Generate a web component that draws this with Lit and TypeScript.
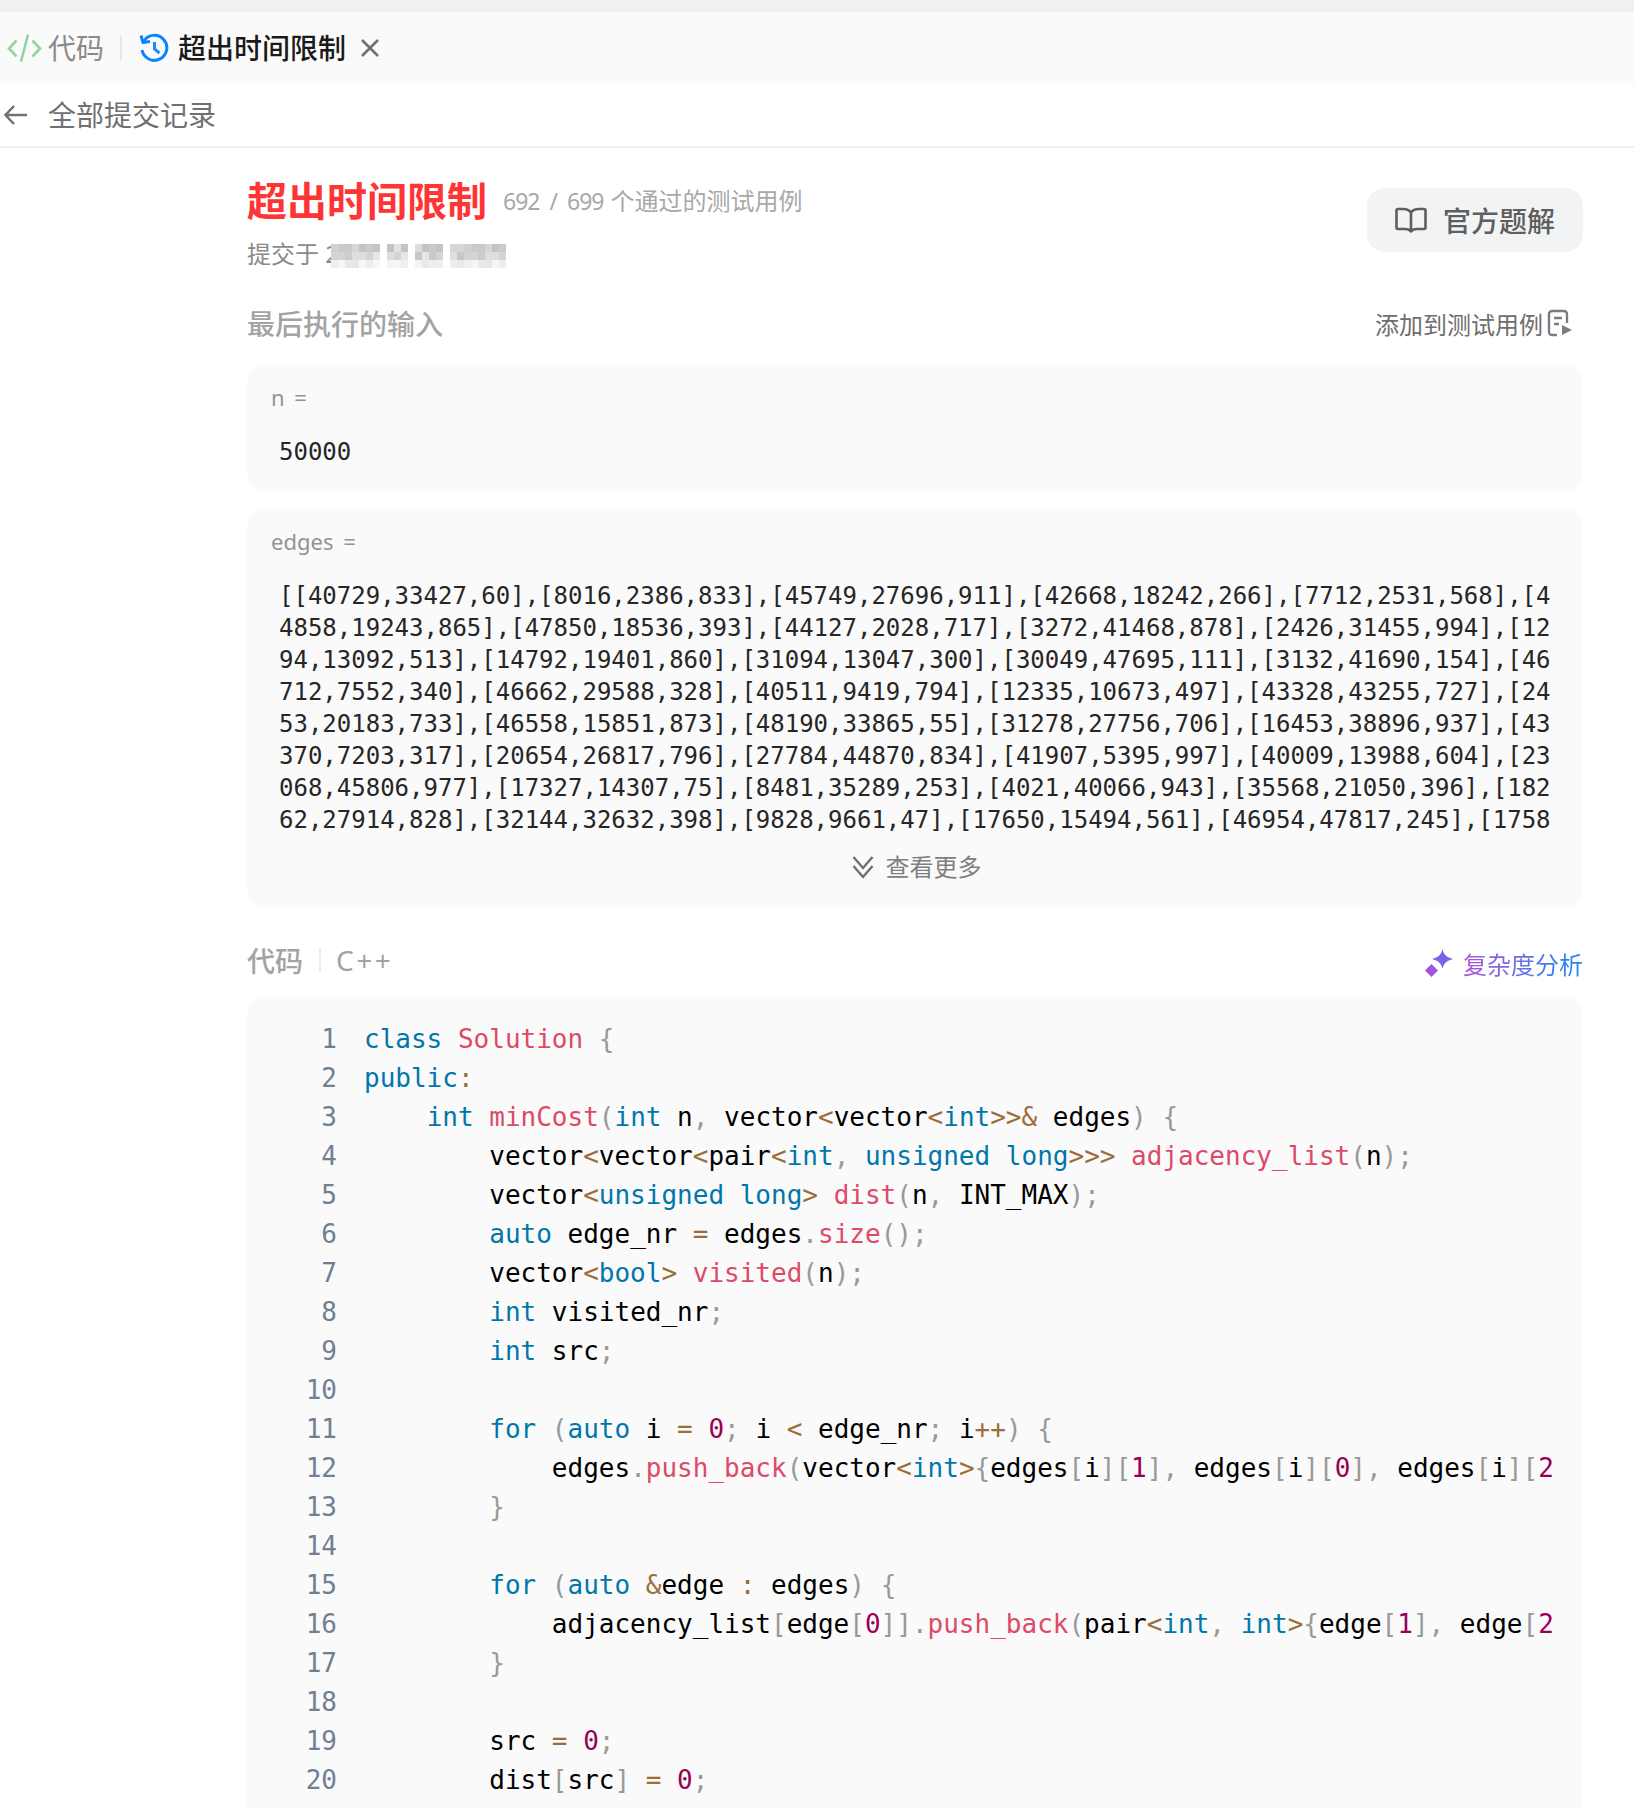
import { LitElement, html, css, svg } from "lit";
import { customElement } from "lit/decorators.js";

const EDGES = [
  "[[40729,33427,60],[8016,2386,833],[45749,27696,911],[42668,18242,266],[7712,2531,568],[4",
  "4858,19243,865],[47850,18536,393],[44127,2028,717],[3272,41468,878],[2426,31455,994],[12",
  "94,13092,513],[14792,19401,860],[31094,13047,300],[30049,47695,111],[3132,41690,154],[46",
  "712,7552,340],[46662,29588,328],[40511,9419,794],[12335,10673,497],[43328,43255,727],[24",
  "53,20183,733],[46558,15851,873],[48190,33865,55],[31278,27756,706],[16453,38896,937],[43",
  "370,7203,317],[20654,26817,796],[27784,44870,834],[41907,5395,997],[40009,13988,604],[23",
  "068,45806,977],[17327,14307,75],[8481,35289,253],[4021,40066,943],[35568,21050,396],[182",
  "62,27914,828],[32144,32632,398],[9828,9661,47],[17650,15494,561],[46954,47817,245],[1758",
];

const CODE = [
  "class Solution {",
  "public:",
  "    int minCost(int n, vector<vector<int>>& edges) {",
  "        vector<vector<pair<int, unsigned long>>> adjacency_list(n);",
  "        vector<unsigned long> dist(n, INT_MAX);",
  "        auto edge_nr = edges.size();",
  "        vector<bool> visited(n);",
  "        int visited_nr;",
  "        int src;",
  "",
  "        for (auto i = 0; i < edge_nr; i++) {",
  "            edges.push_back(vector<int>{edges[i][1], edges[i][0], edges[i][2]});",
  "        }",
  "",
  "        for (auto &edge : edges) {",
  "            adjacency_list[edge[0]].push_back(pair<int, int>{edge[1], edge[2]});",
  "        }",
  "",
  "        src = 0;",
  "        dist[src] = 0;",
];

const KW = new Set(["class", "public", "int", "unsigned", "long", "auto", "for", "bool"]);

function tokens(line: string) {
  const re = /\s+|[A-Za-z_]\w*|\d+|[{}\[\]();,.]|[<>=&:+]/g;
  return (line.match(re) || []).map((t, i, all) => {
    let c = "";
    if (KW.has(t)) c = "k";
    else if (/^[A-Za-z_]/.test(t)) {
      if (t === "Solution" || all[i + 1] === "(") c = "f";
    } else if (/^\d/.test(t)) c = "n";
    else if (/^[{}\[\]();,.]/.test(t)) c = "p";
    else if (/^[<>=&:+]/.test(t)) c = "o";
    return c ? html`<span class=${c}>${t}</span>` : t;
  });
}

const BLUR: [number, number, number, string][] = [];
(function () {
  const rows = [
    ["#d6d6d6", "#cacaca", "#dcdcdc", "#c4c4c4", "#d0d0d0", "#e2e2e2"],
    ["#dedede", "#cccccc", "#ececec", "#c8c8c8", "#e6e6e6", "#d4d4d4"],
    ["#efefef", "#e9e9e9", "#f4f4f4", "#e6e6e6", "#eeeeee", "#f6f6f6"],
  ];
  let s = 7;
  const spans = [[0, 49], [56, 77], [84, 112], [119, 175]];
  for (const [a, b] of spans) {
    for (let x = a; x < b; x += 7) {
      for (let y = 0; y < 3; y++) {
        s = (s * 31 + 11) % 97;
        BLUR.push([x, y * 8, Math.min(7, b - x), rows[y][s % 6]]);
      }
    }
  }
})();

@customElement("app-root")
export class AppRoot extends LitElement {
  static styles = css`
    :host {
      display: block;
      width: 1634px;
      height: 1808px;
      overflow: hidden;
      background: #fff;
      font-family: "Noto Sans", "Noto Sans CJK SC", sans-serif;
      color: #666;
    }
    .top { height: 12px; background: #f0f0f0; }
    .tabs {
      height: 72px;
      background: #fafafa;
      display: flex;
      align-items: center;
      font-size: 28px;
      padding-left: 6px;
    }
    .tabs svg { flex: none; }
    .t-code { color: #8a8a8a; margin-left: 6px; line-height: 40px; }
    .sep { width: 2px; height: 24px; background: #e6e6e6; margin: 0 17px 0 16px; }
    .t-act { color: #1a1a1a; font-weight: 500; margin-left: 9px; line-height: 40px; }
    .x { margin-left: 13px; }
    .back {
      height: 64px;
      box-sizing: border-box;
      padding: 0 0 0 3px;
      border-bottom: 2px solid #f0f0f0;
      display: flex;
      align-items: center;
      font-size: 28px;
      color: #707070;
      gap: 20px;
    }
    .back span { margin-top: -2px; }
    .main { padding: 40px 51px 0 247px; }
    .head { display: flex; justify-content: space-between; align-items: flex-start; }
    .title-row { display: flex; align-items: center; height: 26px; }
    .title { font-size: 40px; font-weight: 700; color: #ff3535; line-height: 26px; }
    .stat { font-size: 24px; color: #a8a8a8; margin: -3px 0 0 16px; }
    .stat b { font-weight: 400; font-size: 23px; letter-spacing: -1px; word-spacing: 5px; }
    .stat em { font-style: normal; margin-left: 7px; }
    .sub { display: flex; align-items: flex-start; font-size: 24px; color: #8a8a8a; margin-top: 25px; height: 30px; line-height: 30px; }
    .blur { margin: 5px 0 0 -8px; filter: blur(0.5px); }
    .btn {
      width: 216px;
      height: 64px;
      border-radius: 18px;
      background: #f2f3f5;
      display: flex;
      align-items: center;
      justify-content: center;
      gap: 16px;
      font-size: 28px;
      font-weight: 500;
      color: #5e5e5e;
    }
    .sec {
      display: flex;
      justify-content: space-between;
      align-items: center;
      height: 40px;
    }
    .sec-inp { margin-top: 34px; }
    .sec-title { font-size: 28px; color: #a3a3a3; font-weight: 500; }
    .add { display: flex; align-items: center; gap: 4px; font-size: 24px; color: #6e6e6e; padding-right: 10px; }
    .box { box-sizing: border-box; background: #fafafa; border-radius: 18px; padding: 16px 25px 0 24px; overflow: hidden; }
    .box1 { height: 128px; margin-top: 21px; }
    .box2 { height: 400px; margin-top: 16px; }
    .lab { font-size: 22px; word-spacing: 4px; color: #939393; line-height: 34px; }
    .val {
      font-family: "DejaVu Sans Mono", monospace;
      font-size: 24px;
      line-height: 32px;
      color: #262626;
      white-space: pre;
      margin: 22px 0 0 8px;
    }
    .more {
      display: flex;
      justify-content: center;
      align-items: center;
      gap: 11px;
      font-size: 24px;
      color: #808080;
      height: 34px;
      margin-top: 12px;
      padding-left: 3px;
    }
    .more svg { margin-top: 4px; }
    .sec-code { margin-top: 32px; }
    .lang { display: flex; align-items: center; }
    .lang i { width: 2px; height: 24px; background: #ececec; margin: 0 15px 0 16px; }
    .lang span { letter-spacing: 2.5px; font-weight: 400; }
    .cx { display: flex; align-items: center; gap: 9px; font-size: 24px; margin-top: 6px; }
    .cx span {
      background: linear-gradient(90deg, #b155d8, #1a87f5);
      -webkit-background-clip: text;
      background-clip: text;
      color: transparent;
    }
    .code {
      box-sizing: border-box;
      margin-top: 16px;
      background: #fafafa;
      border-radius: 18px 18px 0 0;
      padding: 24px 31px 0 0;
      height: 900px;
      display: grid;
      grid-template-columns: 90px 1fr;
      column-gap: 27px;
      overflow: hidden;
      font-family: "DejaVu Sans Mono", monospace;
      font-size: 26px;
      line-height: 39px;
    }
    .nums { text-align: right; color: #708090; }
    .lines { color: #000; white-space: pre; overflow: hidden; }
    .lines div { height: 39px; }
    .k { color: #0077aa; }
    .f { color: #dd4a68; }
    .n { color: #990055; }
    .p { color: #999; }
    .o { color: #9a6e3a; }
  `;

  render() {
    return html`
      <div class="top"></div>
      <div class="tabs">
        <svg width="36" height="32" viewBox="0 0 36 32" fill="none" stroke="#8fd6a4" stroke-width="2.6">
          <path d="M10.500 8.500 3 16.500 10.500 24.500M26.500 8.500 34 16.500 26.500 24.500M22 2.500 15 29.500"/>
        </svg>
        <span class="t-code">代码</span>
        <i class="sep"></i>
        <svg width="30" height="30" viewBox="0 0 30 30" fill="none" stroke="#0a84ff" stroke-width="3">
          <path d="M4.500 8.500A12.500 12.500 0 1 1 3 17"/>
          <path d="M2 2.500 4 9.500l7-1" stroke-linejoin="round"/>
          <path d="M15.500 9v7l5 4" stroke="#1a8cff"/>
        </svg>
        <span class="t-act">超出时间限制</span>
        <svg class="x" width="22" height="22" viewBox="0 0 22 22" stroke="#707070" stroke-width="2.600">
          <path d="M3 3l16 16M19 3 3 19"/>
        </svg>
      </div>
      <div class="back">
        <svg width="25" height="24" viewBox="0 0 25 24" fill="none" stroke="#707070" stroke-width="2.500">
          <path d="M24 12H3M11 3 2.500 12l8.500 9"/>
        </svg>
        <span>全部提交记录</span>
      </div>
      <div class="main">
        <div class="head">
          <div>
            <div class="title-row">
              <span class="title">超出时间限制</span>
              <span class="stat"><b>692 / 699</b><em>个通过的测试用例</em></span>
            </div>
            <div class="sub">
              <span>提交于 2</span>
              <svg class="blur" width="175" height="24" viewBox="0 0 175 24" shape-rendering="crispEdges">
                ${BLUR.map(([x, y, w, c]) => svg`<rect x=${x} y=${y} width=${w} height="8" fill=${c}/>`)}
              </svg>
            </div>
          </div>
          <div class="btn">
            <svg width="32" height="26" viewBox="0 0 32 26" fill="none" stroke="#5e5e5e" stroke-width="2.600" stroke-linejoin="round">
              <path d="M16 5.500C14 2.500 11 2 8 2H3a1.500 1.500 0 0 0-1.500 1.500v17A1.500 1.500 0 0 0 3 22h7c3 0 5 1 6 2.500 1-1.500 3-2.500 6-2.500h7a1.500 1.500 0 0 0 1.500-1.500v-17A1.500 1.500 0 0 0 29 2h-5c-3 0-6 .5-8 3.500zM16 5.500V24"/>
            </svg>
            <span>官方题解</span>
          </div>
        </div>
        <div class="sec sec-inp">
          <span class="sec-title">最后执行的输入</span>
          <span class="add">添加到测试用例
            <svg width="26" height="28" viewBox="0 0 26 28" fill="none" stroke="#7c7c7c" stroke-width="2.400">
              <path d="M10 26H5a3 3 0 0 1-3-3V5a3 3 0 0 1 3-3h12a3 3 0 0 1 3 3v9M7 9h8M7 15h5"/>
              <path d="M15 16l10 5-10 5z" fill="#7c7c7c" stroke="none"/>
            </svg>
          </span>
        </div>
        <div class="box box1">
          <div class="lab">n =</div>
          <div class="val">50000</div>
        </div>
        <div class="box box2">
          <div class="lab">edges =</div>
          <div class="val">${EDGES.join("\n")}</div>
          <div class="more">
            <svg width="24" height="24" viewBox="0 0 24 24" fill="none" stroke="#707070" stroke-width="2.400">
              <path d="M2.500 2 12 13 21.500 2M2.500 11 12 22 21.500 11"/>
            </svg>
            <span>查看更多</span>
          </div>
        </div>
        <div class="sec sec-code">
          <div class="sec-title lang"><b style="font-weight:500">代码</b><i></i><span>C++</span></div>
          <div class="cx">
            <svg width="30" height="30" viewBox="0 0 30 30">
              <defs>
                <linearGradient id="g" x1="0" y1="1" x2="1" y2="0">
                  <stop offset="0" stop-color="#b44fd4"/>
                  <stop offset="1" stop-color="#5a70f5"/>
                </linearGradient>
              </defs>
              <path fill="url(#g)" d="M18.500 1C19.500 6.500 23 9.500 29 11 23 12.500 19.500 15.500 18.500 21 17.500 15.500 14 12.500 8 11 14 9.500 17.500 6.500 18.500 1zM7.500 16 14 22.500 7.500 29 1 22.500z"/>
            </svg>
            <span>复杂度分析</span>
          </div>
        </div>
        <div class="code">
          <div class="nums">${CODE.map((_, i) => html`<div>${i + 1}</div>`)}</div>
          <div class="lines">${CODE.map((l) => html`<div>${tokens(l)}</div>`)}</div>
        </div>
      </div>
    `;
  }
}
